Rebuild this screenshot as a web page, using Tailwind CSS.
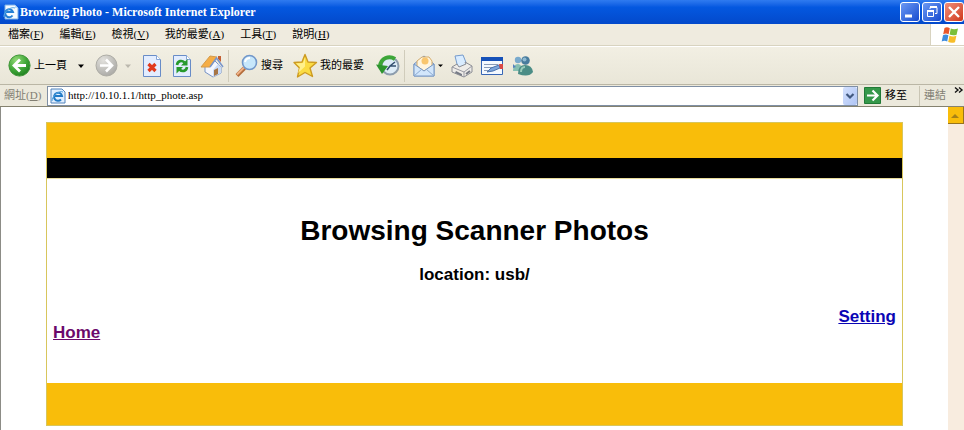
<!DOCTYPE html>
<html lang="zh-Hant">
<head>
<meta charset="utf-8">
<title>Browzing Photo</title>
<script src="https://cdn.jsdelivr.net/npm/@tailwindcss/browser@4"></script>
</head>
<body class="flex h-screen flex-col overflow-hidden bg-white font-['Liberation_Serif','Noto_Sans_CJK_TC',serif] text-[11px] text-black">
<header class="flex shrink-0 flex-col">
  <div class="flex h-6 items-center bg-linear-to-b from-[#2f7bf0] via-[#0458e0] via-30% to-[#0349cb] pl-[3px]">
    <svg class="h-4 w-4" viewBox="0 0 16 16" aria-hidden="true"><path d="M2 1h10l3 3v11H2z" fill="#f5faff" stroke="#7baee5"/><path d="M12 1v3h3" fill="#b9d7f5"/><path d="M9.500 11.500A4 4 0 1 1 10 8H3" fill="none" stroke="#2580d5" stroke-width="2"/><path d="M1 13C0 9 7 2 12 4" fill="none" stroke="#58a9e8"/></svg>
    <h1 class="ml-px flex-1 text-xs font-bold text-white">Browzing Photo - Microsoft Internet Explorer</h1>
    <div class="flex gap-[2px]">
      <button type="button" aria-label="Minimize" class="h-5 w-5 rounded-[3px] border border-white bg-linear-to-br from-[#6c98f3] to-[#1549cf]"><svg viewBox="0 0 18 18"><path d="M4 13h7" stroke="#fff" stroke-width="3"/></svg></button>
      <button type="button" aria-label="Restore" class="h-5 w-5 rounded-[3px] border border-white bg-linear-to-br from-[#6c98f3] to-[#1549cf]"><svg viewBox="0 0 18 18" fill="none" stroke="#fff"><path d="M7 6V4.500h7v6h-2"/><path d="M4.500 8.500h6v5h-6z"/><path d="M4 8h7M7 4h7" stroke-width="2"/></svg></button>
      <button type="button" aria-label="Close" class="h-5 w-5 rounded-[3px] border border-white bg-linear-to-br from-[#f08c78] to-[#cf3516]"><svg viewBox="0 0 18 18"><path d="M4 4l10 10M14 4L4 14" stroke="#fff" stroke-width="2.400"/></svg></button>
    </div>
  </div>
  <nav class="flex h-[22px] border-b border-[#d8d3c0] bg-[#efebdf]" aria-label="Menu">
    <div class="flex flex-1 items-center gap-4 pl-2">
      <button type="button">檔案(<u>F</u>)</button>
      <button type="button">編輯(<u>E</u>)</button>
      <button type="button">檢視(<u>V</u>)</button>
      <button type="button">我的最愛(<u>A</u>)</button>
      <button type="button">工具(<u>T</u>)</button>
      <button type="button">說明(<u>H</u>)</button>
    </div>
    <div class="flex w-[34px] items-center justify-center border-l border-[#d8d3c0] bg-white pl-1">
      <svg class="h-[18px] w-[18px]" viewBox="0 0 18 18" aria-label="Windows"><path d="M3.500 2Q6 .5 8.800 2.200L7.600 8.200Q5 7 2.200 8.200z" fill="#e9572b"/><path d="M9.800 2.500Q13 4 17 2.500L15.600 8.800Q12 10 8.600 8.600z" fill="#7bbf3a"/><path d="M2 9.200Q5 8 7.400 9.300L6.200 15.500Q3.500 14 .7 15.500z" fill="#3e8cde"/><path d="M8.400 9.700Q12 11 15.400 9.800L14 16.200Q10.500 17.500 7.200 16z" fill="#f7bd2a"/></svg>
    </div>
  </nav>
  <div class="flex h-[38px] items-center border-t border-white bg-linear-to-b from-[#f2efe3] to-[#e9e6d8] pl-2" role="toolbar" aria-label="Toolbar">
    <button type="button" class="flex items-center gap-[3px]">
      <svg class="h-[23px] w-[23px]" viewBox="0 0 23 23" aria-hidden="true"><defs><radialGradient id="g" cx=".35" cy=".25" r=".8"><stop offset="0" stop-color="#92da76"/><stop offset=".6" stop-color="#3fa637"/><stop offset="1" stop-color="#1f7f20"/></radialGradient></defs><circle cx="11.500" cy="11.500" r="10.600" fill="url(#g)" stroke="#43963b"/><path d="M12 5.500l-6 6 6 6M6.500 11.500H18" fill="none" stroke="#fff" stroke-width="2.800"/></svg>
      上一頁
    </button>
    <button type="button" aria-label="Back history" class="ml-[10px] w-2"><svg viewBox="0 0 8 8"><path d="M1 2.500h6L4 6z"/></svg></button>
    <button type="button" aria-label="Forward" class="ml-[10px] w-[23px]" disabled><svg viewBox="0 0 23 23"><defs><radialGradient id="d" cx=".35" cy=".25" r=".8"><stop offset="0" stop-color="#e2e1dd"/><stop offset="1" stop-color="#aaa9a5"/></radialGradient></defs><circle cx="11.500" cy="11.500" r="10.500" fill="url(#d)" stroke="#adaca5"/><path d="M11 5.500l6 6-6 6M16.500 11.500H5" fill="none" stroke="#fff" stroke-width="2.600"/></svg></button>
    <button type="button" aria-label="Forward history" class="ml-[6px] w-2" disabled><svg viewBox="0 0 8 8"><path d="M1 2.500h6L4 6z" fill="#bbb8ad"/></svg></button>
    <button type="button" aria-label="Stop" class="ml-[10px] w-5"><svg viewBox="0 0 20 24"><path d="M1.500 1.500h13l4 4v17h-17z" fill="#e3edff" stroke="#688cc7"/><path d="M14.500 1.500v4h4" fill="#fff" stroke="#86a5d6"/><path d="M6.500 10l7 7M13.500 10l-7 7" stroke="#e13a1d" stroke-width="3.200"/></svg></button>
    <button type="button" aria-label="Refresh" class="ml-[10px] w-5"><svg viewBox="0 0 20 24"><path d="M1.500 1.500h13l4 4v17h-17z" fill="#e3edff" stroke="#688cc7"/><path d="M14.500 1.500v4h4" fill="#fff" stroke="#86a5d6"/><path d="M5 11c.5-4.500 5-5 7.500-2.500M15 13c-.5 4.500-5 5-7.500 2.500" fill="none" stroke="#279a2d" stroke-width="2.600"/><path d="M15.500 5v6.500H9zM4.500 19.500V13H11z" fill="#279a2d"/></svg></button>
    <button type="button" aria-label="Home" class="ml-2 w-6"><svg viewBox="0 0 24 24"><path d="M5 10l8-5 8 8v6l-8 4-8-5z" fill="#f4f7ff" stroke="#7793c5"/><path d="M13 23l8-4v-6l-3-3-5 6z" fill="#cbdcf7"/><path d="M1 13L10 2l7 1-7 10z" fill="#f5ad45" stroke="#d39a4c"/><path d="M18 2h3v6l-3-3z" fill="#c35f33"/><path d="M10 13L16.500 4l6.500 9" fill="none" stroke="#7895cb" stroke-width="1.500"/><path d="M14 16l4-2v6l-4 2z" fill="#a67546"/></svg></button>
    <div class="ml-1 h-8 w-px bg-[#d0ccbb]"></div>
    <button type="button" class="ml-[6px] flex items-center gap-[2px]">
      <svg class="h-6 w-6" viewBox="0 0 24 24" aria-hidden="true"><path d="M9.500 14l-7.500 7.500" stroke="#b56d3c" stroke-width="4"/><path d="M9 13.500l-7 7" stroke="#efb287" stroke-width="2"/><circle cx="14.500" cy="8.500" r="7" fill="#c7e7fb" stroke="#7297c9" stroke-width="1.600"/><path d="M10 8q1-4 5-4" fill="none" stroke="#fff" stroke-width="2"/></svg>
      搜尋
    </button>
    <button type="button" class="ml-[10px] flex items-center gap-[2px]">
      <svg class="h-[25px] w-[25px]" viewBox="0 0 25 25" aria-hidden="true"><path d="M12 1.500l3 7.500 8.500.5-6.500 5.500 2.500 8.500-7.500-4-7.500 4.500 2-9L1 9.500l8-.5z" fill="#fbdc43" stroke="#cd9b22" stroke-width="1.400" stroke-linejoin="round"/><path d="M12 4.500v9L5 20l2-6-4-3.500 7-.5z" fill="#fff08c"/></svg>
      我的最愛
    </button>
    <button type="button" aria-label="History" class="ml-3 w-6"><svg viewBox="0 0 24 24"><circle cx="14" cy="12" r="8.500" fill="#deecf7" stroke="#8d9dad" stroke-width="2"/><path d="M4 12C5 4 13 1 19 5" fill="none" stroke="#3da638" stroke-width="4"/><path d="M0 10.500l12 1.500-6 8z" fill="#2d942e"/><path d="M11 16l3-4 5-4M14 12h6" fill="none" stroke="#334f70" stroke-width="1.600"/></svg></button>
    <div class="ml-1 h-8 w-px bg-[#d0ccbb]"></div>
    <button type="button" aria-label="Mail" class="ml-2 flex items-center gap-px"><svg class="h-6 w-[22px]" viewBox="0 0 22 24"><path d="M1 10L11 2l10 8v12H1z" fill="#b9d4f2" stroke="#7798c7"/><path d="M4 12V7l5-4h7l3 4v5l-8 5z" fill="#fff5df" stroke="#d5ab68"/><circle cx="12" cy="7" r="3.500" fill="#f9c66e"/><path d="M1 10l10 7 10-7v12H1z" fill="#d2e6fb" stroke="#7898c4"/><path d="M1 22l8-7M21 22l-8-7" stroke="#8baad2"/></svg><svg class="h-2 w-2" viewBox="0 0 8 8"><path d="M2 2.500h5L4.500 5z"/></svg></button>
    <button type="button" aria-label="Print" class="ml-[6px] w-6"><svg viewBox="0 0 24 24"><path d="M5 2l8-1 4 10-9 3z" fill="#d9ecff" stroke="#759bcc"/><path d="M2 13l5-3 2 3 7-3-1-2 7 4v6l-8 5-12-5z" fill="#eeece8" stroke="#8b8d94"/><path d="M2 13l12 5 8-6M14 18v5" fill="none" stroke="#999aa3"/><path d="M6 17l6 3v2l-7-3z" fill="#777b86"/><path d="M16 20l4-3" stroke="#777b86" stroke-width="2"/></svg></button>
    <button type="button" aria-label="Edit" class="ml-[6px] w-6"><svg viewBox="0 0 24 24"><path d="M1.500 3.500h21v17h-21z" fill="#f4f9ff" stroke="#3766b5"/><path d="M1 3h22v4H1z" fill="#1651b8"/><path d="M4 10.500h14M4 13.500h9M4 16.500h5" stroke="#899bb7"/><path d="M7 18l4-4 8-3 1 3-7 3z" fill="#7ca5dc" stroke="#4a73ae"/><path d="M19 10h4v5h-3z" fill="#d94845"/></svg></button>
    <button type="button" aria-label="Messenger" class="ml-[6px] w-6"><svg viewBox="0 0 24 24"><circle cx="8" cy="6" r="3.200" fill="#79aacd"/><path d="M3 17q0-7 5-7 4 0 4 7z" fill="#86bfb2"/><circle cx="15.500" cy="6.500" r="4.300" fill="#497c9d"/><circle cx="14.500" cy="5.500" r="2" fill="#8fbad1"/><path d="M8 20q0-9 7-9t8 7q-4 6-15 2z" fill="#4b8d86"/><path d="M11 18q0-5 4-5" fill="none" stroke="#9accba" stroke-width="2"/><path d="M3 10l3 3-3 1z" fill="#5683bd"/></svg></button>
  </div>
  <div class="flex h-[23px] items-center border-t border-b border-t-[#bab6a5] border-b-[#85826f] bg-[#ece9dc] pl-1">
    <label for="address" class="w-[43px] text-[#817e73]">網址(<u>D</u>)</label>
    <div class="flex h-5 flex-1 items-center border border-[#7f8fa4] bg-white pl-[2px]">
      <svg class="h-4 w-4" viewBox="0 0 16 16" aria-hidden="true"><path d="M1 1h11l3 3v11H1z" fill="#e1efff" stroke="#5183bc"/><path d="M11 11.500A4 4 0 1 1 12 8H5" fill="none" stroke="#217ac6" stroke-width="2"/><path d="M2 13C2 8 9 2 13 4" fill="none" stroke="#4fa2df"/></svg>
      <input id="address" type="text" value="http://10.10.1.1/http_phote.asp" class="ml-[2px] min-w-0 flex-1 bg-transparent outline-none">
      <button type="button" aria-label="Show addresses" class="h-[18px] w-[14px] rounded-[2px] bg-linear-to-br from-[#d3e0fd] to-[#afc5f4]"><svg viewBox="0 0 14 18"><path d="M3.500 7l3.500 3.500L10.500 7" fill="none" stroke="#41587f" stroke-width="2.200"/></svg></button>
    </div>
    <button type="button" class="ml-[6px] flex items-center gap-1">
      <svg class="h-[17px] w-[17px]" viewBox="0 0 17 17" aria-hidden="true"><path d="M.5.500h16v16H.5z" fill="#35984a" stroke="#227a37"/><path d="M8.500 3.500l5 5-5 5M13 8.500H3" fill="none" stroke="#fff" stroke-width="2.200"/></svg>
      移至
    </button>
    <div class="ml-3 h-5 w-px bg-[#c9c5b4]"></div>
    <button type="button" class="ml-1 text-[#817e73]">連結</button>
    <button type="button" aria-label="More links" class="ml-2 w-[10px] self-start"><svg viewBox="0 0 10 10"><path d="M1 2.500l3 2.500-3 2.500M5 2.500L8 5 5 7.500" fill="none" stroke="#111" stroke-width="1.400"/></svg></button>
  </div>
</header>
<div class="flex min-h-0 flex-1 border-l border-[#8c8c86]">
  <main class="min-w-0 flex-1 overflow-hidden px-[45px] pt-[15px] font-['Liberation_Sans',sans-serif]">
    <section class="border border-[#d8c65c]">
      <div class="h-[35px] bg-[#f9bd0a]"></div>
      <div class="h-5 bg-black"></div>
      <div class="border-t border-[#e8dc9c] px-[6px] pt-8 pb-10 text-center text-[17px] leading-5 font-bold">
        <h2 class="text-[28px] leading-10">Browsing Scanner Photos</h2>
        <p class="mt-[14px]">location: usb/</p>
        <div class="mt-[22px] text-right"><a href="#setting" class="text-[#0a05b5] underline">Setting</a></div>
        <div class="-mt-1 text-left"><a href="#home" class="text-[#6b096b] underline">Home</a></div>
      </div>
      <div class="h-[42px] bg-[#f9bd0a]"></div>
    </section>
  </main>
  <div class="flex w-4 shrink-0 flex-col bg-[#f8ecdf]">
    <button type="button" aria-label="Scroll up" class="h-[17px] border-r border-b border-[#98741c] bg-[#f9bd0a]"><svg viewBox="0 0 15 15"><path d="M3 10l4-4 4 4z" fill="#a68117"/></svg></button>
  </div>
</div>
</body>
</html>
